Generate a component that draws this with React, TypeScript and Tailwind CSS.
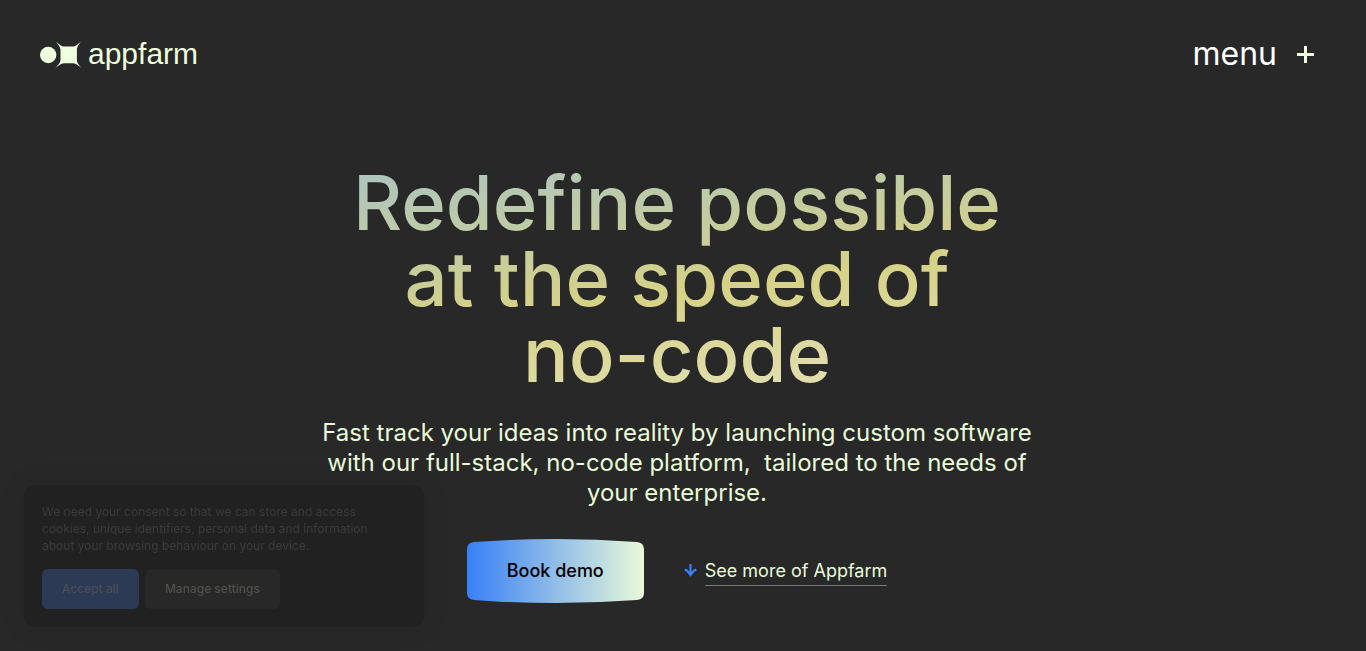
function Logo() {
  return (
    <a href="#home" className="flex items-center gap-[5px] text-[#edffdc]">
      <svg width="43" height="28" viewBox="0 0 43 28" fill="currentColor" aria-hidden="true">
        <circle cx="8.2" cy="15" r="8.2" />
        <path d="M15.200 0.800 C19.500 4.800 21.500 6.600 24.500 6.600 H32.500 C35.500 6.600 37.500 4.800 41.800 0.800 C38 5.200 36.900 7.500 36.900 10.500 V19.500 C36.900 22.500 38 24.300 41.800 28 C37.500 24.800 35.500 23.200 32.500 23.200 H24.500 C21.500 23.200 19.500 24.800 15.200 28 C19 24.300 20.500 22.500 20.500 19.500 V10.500 C20.500 7.500 19 5.200 15.200 0.800 Z" />
      </svg>
      <span className="font-['Liberation_Sans',sans-serif] text-3xl leading-7">appfarm</span>
    </a>
  );
}

function CookieNotice() {
  return (
    <section
      aria-label="Cookie consent"
      className="fixed bottom-6 left-6 w-[400px] rounded-[10px] bg-[#212121] p-[18px] shadow-[0_0_30px_rgba(0,0,0,0.08)]"
    >
      <p className="text-xs leading-[17px] text-[#3b3b3a]">
        We need your consent so that we can store and access
        <br />
        cookies, unique identifiers, personal data and information
        <br />
        about your browsing behaviour on your device.
      </p>
      <div className="mt-[15px] flex gap-1.5 text-xs font-medium">
        <button type="button" className="h-10 rounded-md bg-[#2c3a56] px-5 text-[#4b4f54]">
          Accept all
        </button>
        <button type="button" className="h-10 rounded-md bg-[#282828] px-5 text-[#50514d]">
          Manage settings
        </button>
      </div>
    </section>
  );
}

export default function App() {
  return (
    <div className="min-h-screen bg-[#282828] pr-3 font-['Inter',sans-serif]">
      <header className="flex items-center justify-between px-10 pt-9">
        <Logo />
        <button type="button" className="flex items-center gap-5 text-[32px] leading-9 text-white">
          menu
          <svg width="17" height="17" viewBox="0 0 17 17" fill="#edffdc" aria-hidden="true">
            <path d="M7 0H10V7H17V10H10V17H7V10H0V7H7Z" />
          </svg>
        </button>
      </header>

      <main className="flex flex-col items-center px-10 pt-[92px] text-center">
        <h1 className="w-full bg-linear-172/srgb from-[#a0c1d2] via-[#d6d286] via-54% to-[#e9e8ce] bg-clip-text text-[76px] leading-[76px] font-medium text-transparent">
          Redefine possible
          <br />
          at the speed of
          <br />
          no-code
        </h1>
        <p className="mt-[26px] text-2xl leading-[30px] whitespace-pre-wrap text-[#e9fbd8]">
          Fast track your ideas into reality by launching custom software
          <br />
          {"with our full-stack, no-code platform,  tailored to the needs of"}
          <br />
          your enterprise.
        </p>
        <div className="mt-[31px] flex items-center gap-10">
          <a href="#demo" className="relative isolate flex h-16 items-center px-10 text-lg font-medium text-black">
            <svg
              className="absolute inset-0 -z-10 h-full w-full"
              viewBox="0 0 178 64"
              preserveAspectRatio="none"
              aria-hidden="true"
            >
              <defs>
                <linearGradient id="demo-fill">
                  <stop offset="0.02" stopColor="#3b82f6" />
                  <stop offset="1" stopColor="#e9f9d9" />
                </linearGradient>
              </defs>
              <path
                d="M7 3 Q89 -3 171 3 Q178 4 178 10 V54 Q178 60 171 61 Q89 67 7 61 Q0 60 0 54 V10 Q0 4 7 3 Z"
                fill="url(#demo-fill)"
              />
            </svg>
            Book demo
          </a>
          <a href="#more" className="flex items-center gap-2 text-lg text-[#e9fbd8]">
            <svg width="13" height="14" viewBox="0 0 13 14" fill="none" stroke="#3b82f6" strokeWidth="2.200" aria-hidden="true">
              <path d="M6.500 0V11.500M0.700 5.600L2.800 6.400L6.500 11L10.200 6.400L12.300 5.600" />
            </svg>
            <span className="border-b border-[#777777]">See more of Appfarm</span>
          </a>
        </div>
      </main>

      <CookieNotice />
    </div>
  );
}
